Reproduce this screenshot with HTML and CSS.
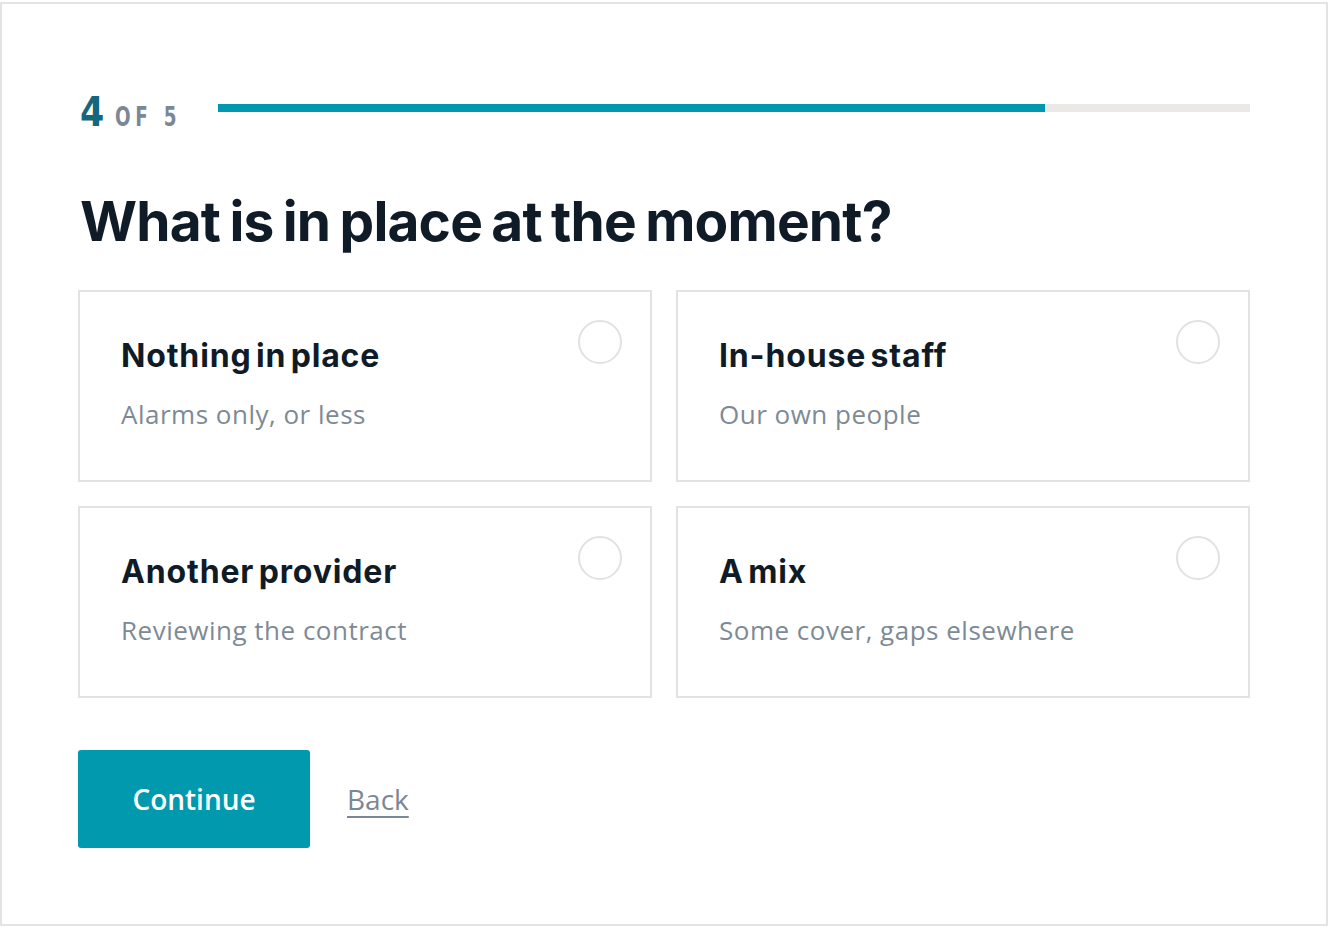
FILE: index.html
```html
<!DOCTYPE html>
<html>
<head>
<meta charset="utf-8">
<link rel="stylesheet" href="styles.css">
</head>
<body>
<div class="frame">
  <div class="progress-row">
    <div class="step"><span class="step-num">4</span><span class="step-of">OF 5</span></div>
    <div class="track"><div class="fill" style="width:80.1%"></div></div>
  </div>
  <h1 class="question">What is in place at the moment?</h1>
  <div class="options">
    <div class="option">
      <div class="text">
        <div class="title">Nothing in place</div>
        <div class="sub">Alarms only, or less</div>
      </div>
      <span class="radio"></span>
    </div>
    <div class="option">
      <div class="text">
        <div class="title">In-house staff</div>
        <div class="sub">Our own people</div>
      </div>
      <span class="radio"></span>
    </div>
    <div class="option">
      <div class="text">
        <div class="title">Another provider</div>
        <div class="sub">Reviewing the contract</div>
      </div>
      <span class="radio"></span>
    </div>
    <div class="option">
      <div class="text">
        <div class="title">A mix</div>
        <div class="sub">Some cover, gaps elsewhere</div>
      </div>
      <span class="radio"></span>
    </div>
  </div>
  <div class="actions">
    <button class="continue">Continue</button>
    <a class="back" href="#">Back</a>
  </div>
</div>
</body>
</html>
```
FILE: styles.css
```css
html, body {
  margin: 0;
  padding: 0;
  background: #ffffff;
}
body {
  padding-top: 2px;
}
.frame {
  box-sizing: border-box;
  width: 1328px;
  height: 924px;
  border: 2px solid #e4e4e2;
  padding: 86px 76px 0 76px;
  font-family: Inter, "Noto Sans", sans-serif;
  color: #0f1b26;
}
.progress-row {
  display: flex;
  align-items: center;
  height: 44px;
}
.step {
  width: 138px;
  display: flex;
  align-items: baseline;
  font-family: "DejaVu Sans", sans-serif;
  font-weight: bold;
  padding-left: 2px;
}
.step-num {
  display: inline-block;
  font-size: 41px;
  color: #14677c;
  line-height: 1;
  transform: scaleX(0.85);
  transform-origin: left center;
  margin-right: 6px;
}
.step-of {
  display: inline-block;
  font-size: 27px;
  color: #7b8794;
  letter-spacing: 7px;
  line-height: 1;
  transform: scaleX(0.68);
  transform-origin: left center;
}
.track {
  flex: 1;
  height: 8px;
  background: #ebe9e6;
  margin-top: -8px;
}
.fill {
  height: 100%;
  background: #0098b0;
}
.question {
  margin: 50px 0 0 2px;
  font-size: 55px;
  font-weight: 700;
  letter-spacing: -0.8px;
  word-spacing: -3px;
  line-height: 74px;
  color: #0f1b26;
}
.options {
  margin-top: 32px;
  display: grid;
  grid-template-columns: 574px 574px;
  gap: 24px;
}
.option {
  box-sizing: border-box;
  height: 192px;
  border: 2px solid #e2e2e2;
  display: flex;
  justify-content: space-between;
  align-items: flex-start;
  padding: 28px 28px 0 41px;
}
.text {
  padding-top: 16px;
}
.title {
  font-size: 32px;
  font-weight: 700;
  letter-spacing: 0.85px;
  word-spacing: -4px;
  line-height: 40px;
  color: #0f1b26;
}
.sub {
  margin-top: 21px;
  font-family: "Open Sans", sans-serif;
  font-size: 26px;
  letter-spacing: 0.5px;
  line-height: 34px;
  color: #7d8a96;
}
.radio {
  box-sizing: border-box;
  width: 44px;
  height: 44px;
  border: 2px solid #e2e2e2;
  border-radius: 50%;
  flex: none;
}
.actions {
  margin-top: 52px;
  display: flex;
  align-items: center;
  gap: 37px;
}
.continue {
  width: 232px;
  height: 98px;
  border: none;
  border-radius: 3px;
  background: #0099ae;
  color: #ffffff;
  font-family: "Open Sans", sans-serif;
  font-size: 28px;
  font-weight: 600;
  padding: 0;
}
.back {
  font-family: "Open Sans", sans-serif;
  font-size: 28px;
  font-weight: 500;
  color: #7b8794;
  text-decoration: underline;
  text-decoration-thickness: 2px;
  text-underline-offset: 6px;
}
```
